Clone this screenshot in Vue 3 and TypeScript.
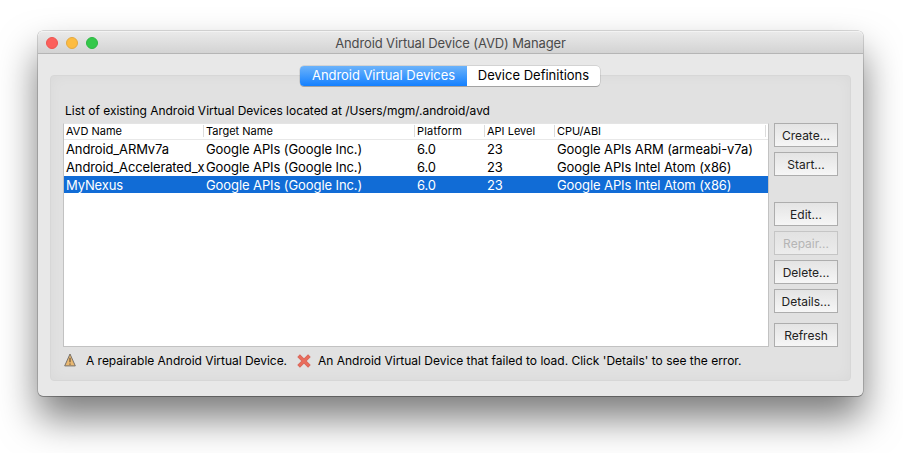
<script setup lang="ts">
interface Avd {
  name: string
  target: string
  platform: string
  api: string
  cpu: string
}

interface Action {
  label: string
  disabled?: boolean
  gap?: 'large' | 'medium'
}

const headers: string[] = ['AVD Name', 'Target Name', 'Platform', 'API Level', 'CPU/ABI']

const devices: Avd[] = [
  { name: 'Android_ARMv7a', target: 'Google APIs (Google Inc.)', platform: '6.0', api: '23', cpu: 'Google APIs ARM (armeabi-v7a)' },
  { name: 'Android_Accelerated_x', target: 'Google APIs (Google Inc.)', platform: '6.0', api: '23', cpu: 'Google APIs Intel Atom (x86)' },
  { name: 'MyNexus', target: 'Google APIs (Google Inc.)', platform: '6.0', api: '23', cpu: 'Google APIs Intel Atom (x86)' },
]

const selected = 'MyNexus'

const actions: Action[] = [
  { label: 'Create...' },
  { label: 'Start...' },
  { label: 'Edit...', gap: 'large' },
  { label: 'Repair...', disabled: true },
  { label: 'Delete...' },
  { label: 'Details...' },
  { label: 'Refresh', gap: 'medium' },
]
</script>

<template>
  <div class="desktop">
    <div class="window">
      <header class="titlebar">
        <div class="lights">
          <span class="light close"></span>
          <span class="light minimize"></span>
          <span class="light zoom"></span>
        </div>
        <span class="title">Android Virtual Device (AVD) Manager</span>
      </header>
      <nav class="tabs">
        <div class="tab active">Android Virtual Devices</div>
        <div class="tab">Device Definitions</div>
      </nav>
      <section class="panel">
        <p class="caption">List of existing Android Virtual Devices located at /Users/mgm/.android/avd</p>
        <div class="content">
          <div class="table">
            <div class="row head">
              <div v-for="h in headers" :key="h" class="cell" :class="{ wide: h === 'Platform' }">{{ h }}</div>
            </div>
            <div v-for="d in devices" :key="d.name" class="row" :class="{ selected: d.name === selected }">
              <div class="cell name">{{ d.name }}</div>
              <div class="cell">{{ d.target }}</div>
              <div class="cell">{{ d.platform }}</div>
              <div class="cell">{{ d.api }}</div>
              <div class="cell">{{ d.cpu }}</div>
            </div>
          </div>
          <div class="actions">
            <button v-for="a in actions" :key="a.label" class="btn" :class="a.gap" :disabled="a.disabled">{{ a.label }}</button>
          </div>
        </div>
        <footer class="legend">
          <svg class="warn" width="12" height="14" viewBox="0 0 12 14">
            <path d="M6 1 L11.3 12.9 H0.7 Z" fill="#e9b871" stroke="#77716a" stroke-width="1" stroke-linejoin="round" />
            <path d="M6 4.8 V9.2 M6 10.4 V11.8" stroke="#5f4c35" stroke-width="1.1" />
          </svg>
          <span class="legend-a">A repairable Android Virtual Device.</span>
          <svg class="fail" width="14" height="14" viewBox="0 0 14 14">
            <path d="M1.6 1.6 L12.4 12.4 M12.4 1.6 L1.6 12.4" stroke="#d9685c" stroke-width="3.8" />
            <path d="M2.2 2.2 L11.8 11.8 M11.8 2.2 L2.2 11.8" stroke="#e96d5c" stroke-width="2.2" />
          </svg>
          <span class="legend-b">An Android Virtual Device that failed to load. Click 'Details' to see the error.</span>
        </footer>
      </section>
    </div>
  </div>
</template>

<style>
body {
  margin: 0;
  background: #fff;
  overflow: hidden;
}
</style>

<style scoped>
.desktop {
  box-sizing: border-box;
  width: 903px;
  height: 453px;
  padding: 31px 40px 0 38px;
  overflow: hidden;
  background: #fff;
  font-family: Inter, "Liberation Sans", sans-serif;
  color: #000;
}
.window {
  box-sizing: border-box;
  height: 365px;
  border-radius: 5px;
  background: #e8e8e8;
  box-shadow: 0 0 0 0.6px rgba(0, 0, 0, 0.27), 0 1px 0 rgba(0, 0, 0, 0.2), 0 22px 38px rgba(0, 0, 0, 0.52);
  display: flex;
  flex-direction: column;
}
.titlebar {
  box-sizing: border-box;
  height: 23px;
  flex: none;
  display: grid;
  grid-template-columns: 70px 1fr 70px;
  align-items: center;
  border-bottom: 1px solid #b5b5b5;
  border-radius: 5px 5px 0 0;
  background: linear-gradient(#ebebeb, #d3d3d3);
  box-shadow: inset 0 1px 0 #f3f3f3;
}
.lights {
  display: flex;
  gap: 8px;
  padding-left: 8px;
  padding-top: 1px;
}
.light {
  box-sizing: border-box;
  width: 12px;
  height: 12px;
  border-radius: 50%;
}
.close { background: #fc605c; border: 1px solid #ed5550; }
.minimize { background: #fdbc40; border: 1px solid #e4a940; }
.zoom { background: #34c84a; border: 1px solid #2db742; }
.title {
  justify-self: center;
  padding-top: 2px;
  font-size: 13px;
  line-height: 18px;
  letter-spacing: -0.12px;
  color: #4b4b4b;
  white-space: nowrap;
}
.tabs {
  position: relative;
  z-index: 1;
  width: 300px;
  height: 20px;
  margin: 12px 0 -11px 262px;
  flex: none;
  display: flex;
  border-radius: 4px;
  box-shadow: 0 0 0 0.5px rgba(0, 0, 0, 0.18), 0 1px 0 rgba(0, 0, 0, 0.2);
  background: #fff;
  overflow: hidden;
}
.tab {
  width: 133px;
  font-size: 13px;
  line-height: 19px;
  text-align: center;
  white-space: nowrap;
  letter-spacing: 0;
}
.tab.active {
  width: 167px;
  letter-spacing: -0.05px;
  color: #fff;
  background: linear-gradient(#6cb3fa, #1480ff);
}
.panel {
  box-sizing: border-box;
  width: 801px;
  height: 306px;
  margin-left: 12px;
  padding: 0 13px;
  border: 1px solid #d7d7d7;
  border-radius: 4px;
  background: #e1e1e1;
  box-shadow: inset 0 0 14px rgba(0, 0, 0, 0.035);
  display: flex;
  flex-direction: column;
}
.caption {
  margin: 0;
  padding: 26px 0 0 1px;
  height: 21px;
  font-size: 12px;
  line-height: 18px;
  letter-spacing: -0.02px;
  white-space: nowrap;
}
.content {
  display: flex;
  height: 224px;
  gap: 5px;
  margin-left: -1px;
}
.table {
  box-sizing: border-box;
  width: 706px;
  height: 224px;
  flex: none;
  border: 1px solid #c2c2c2;
  border-top-color: #e4e4e4;
  background: #fff;
}
.row {
  display: grid;
  grid-template-columns: 140px 211px 70px 70px 211px;
  height: 18px;
  line-height: 19px;
  font-size: 13px;
  letter-spacing: -0.09px;
}
.cell {
  box-sizing: border-box;
  padding-left: 2px;
  white-space: nowrap;
}
.cell.name { letter-spacing: -0.13px; }
.row.head {
  box-sizing: border-box;
  height: 16px;
  line-height: 15px;
  font-size: 11px;
  letter-spacing: 0;
  border-bottom: 1px solid #e8e8e8;
}
.head .cell {
  height: 12px;
  margin-top: 1px;
  line-height: 13px;
  border-right: 1px solid #dcdcdc;
}
.head .cell.wide { letter-spacing: 0.2px; }
.row.selected {
  height: 17px;
  line-height: 18px;
  color: #fff;
  background: #116cd6;
}
.actions {
  display: flex;
  flex-direction: column;
  gap: 5px;
}
.btn {
  box-sizing: border-box;
  width: 64px;
  height: 24px;
  flex: none;
  margin: 0;
  padding: 2px 0 0;
  border: 1px solid #adadad;
  border-radius: 0;
  background: linear-gradient(#e4e4e4, #f6f6f6);
  color: #222;
  font-family: inherit;
  font-size: 12px;
  line-height: 18px;
}
.btn.large { margin-top: 21px; }
.btn.medium { margin-top: 5px; }
.btn:disabled {
  border-color: #c5c5c5;
  background: linear-gradient(#e2e2e2, #ececec);
  color: #b5b5b5;
}
.legend {
  display: flex;
  align-items: center;
  height: 18px;
  margin-top: 5px;
  font-size: 12px;
  line-height: 18px;
  letter-spacing: -0.01px;
  white-space: nowrap;
}
.warn { flex: none; width: 12px; margin-right: 10px; margin-bottom: 2px; }
.legend-a { width: 211px; flex: none; letter-spacing: -0.03px; }
.fail { flex: none; margin-right: 7px; }
</style>
